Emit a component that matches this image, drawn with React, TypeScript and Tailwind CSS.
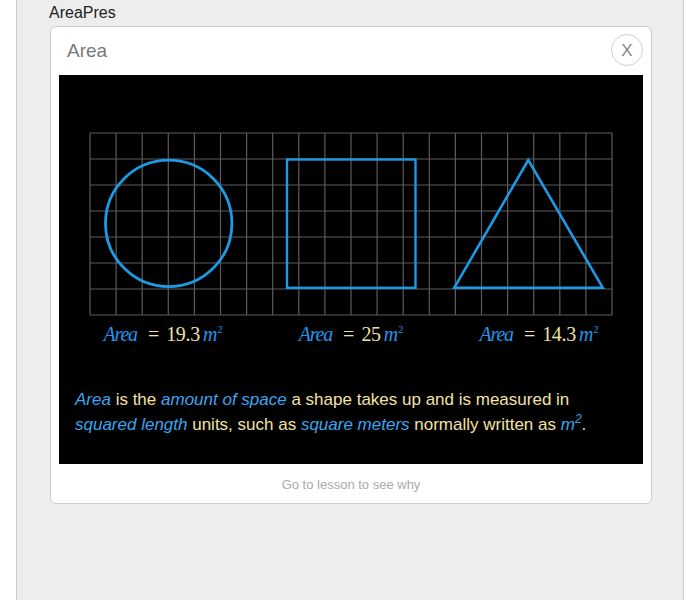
import React from "react";

const COLS = 20;
const ROWS = 7;
const GX = 31;
const GY = 58;
const CW = 26.1;
const CH = 26;

function Figure() {
  const lines: React.ReactNode[] = [];
  for (let i = 0; i <= COLS; i++) {
    const x = GX + i * CW;
    lines.push(<line key={"v" + i} x1={x} y1={GY} x2={x} y2={GY + ROWS * CH} stroke="#5c5c5c" strokeWidth={1.2} />);
  }
  for (let j = 0; j <= ROWS; j++) {
    const y = GY + j * CH;
    lines.push(<line key={"h" + j} x1={GX} y1={y} x2={GX + COLS * CW} y2={y} stroke="#5c5c5c" strokeWidth={1.2} />);
  }
  return (
    <svg width={584} height={245} viewBox="0 0 584 245" className="block">
      {lines}
      <circle cx={109.7} cy={148.4} r={63.2} fill="none" stroke="#1b9ae6" strokeWidth={2.8} />
      <rect x={228} y={84.5} width={128.5} height={128.3} fill="none" stroke="#1b9ae6" strokeWidth={2.4} />
      <polygon points="469.3,85 395.3,212.7 543.7,212.7" fill="none" stroke="#1b9ae6" strokeWidth={2.6} strokeLinejoin="miter" />
    </svg>
  );
}

function Label({ value }: { value: string }) {
  return (
    <div className="w-[188px] flex justify-center items-baseline text-[20px] leading-[24px]" style={{ fontFamily: '"Liberation Serif", "Times New Roman", serif' }}>
      <span className="italic text-[#2196ee] tracking-[-1.2px]">Area</span>
      <span className="text-[#ece0a6] ml-[11px] mr-[7px]">=</span>
      <span className="text-[#ece0a6] tracking-[-0.3px]">{value}</span>
      <span className="italic text-[#2196ee] ml-[3px]">m</span>
      <span className="text-[#2196ee] text-[10px] relative top-[-8px]">2</span>
    </div>
  );
}

export default function App() {
  return (
    <div className="w-[700px] h-[600px] bg-white overflow-hidden" style={{ fontFamily: '"Liberation Sans", Arial, sans-serif' }}>
      <div className="ml-[16px] w-[668px] h-[600px] bg-[#ededed] border-x border-[#cccccc] pl-[32px]">
        <div className="pt-[3px] text-[16px] leading-[20px] text-[#222]">AreaPres</div>
        <div className="mt-[3px] ml-[1px] w-[602px] bg-white border border-[#cccccc] rounded-[6px]">
          <div className="h-[48px] flex items-center justify-between pl-[16px] pr-[8px]">
            <span className="text-[19px] text-[#7a7a7a] leading-[24px] mt-[-1px]">Area</span>
            <div className="w-[32px] h-[32px] rounded-full border border-[#d0d0d0] flex items-center justify-center text-[17px] text-[#888] leading-none mt-[-2px]">X</div>
          </div>
          <div className="mx-[8px] w-[584px] h-[389px] bg-black">
            <Figure />
            <div className="flex pl-[10px] mt-[2px] h-[26px]">
              <Label value="19.3" />
              <Label value="25" />
              <Label value="14.3" />
            </div>
            <p className="px-[16px] mt-[39px] text-[17px] leading-[25px] text-[#f0e3a6]">
              <span className="italic text-[#3aa6f2]">Area</span> is the{" "}
              <span className="italic text-[#3aa6f2]">amount of space</span> a shape takes up and is measured in{" "}
              <span className="italic text-[#3aa6f2]">squared length</span> units, such as{" "}
              <span className="italic text-[#3aa6f2]">square meters</span> normally written as{" "}
              <span className="italic text-[#3aa6f2]">m<sup className="text-[12px] top-[-7px]">2</sup></span>.
            </p>
          </div>
          <div className="h-[39px] flex items-center justify-center text-[13px] text-[#aaaaaa] pt-[2px]">Go to lesson to see why</div>
        </div>
      </div>
    </div>
  );
}
